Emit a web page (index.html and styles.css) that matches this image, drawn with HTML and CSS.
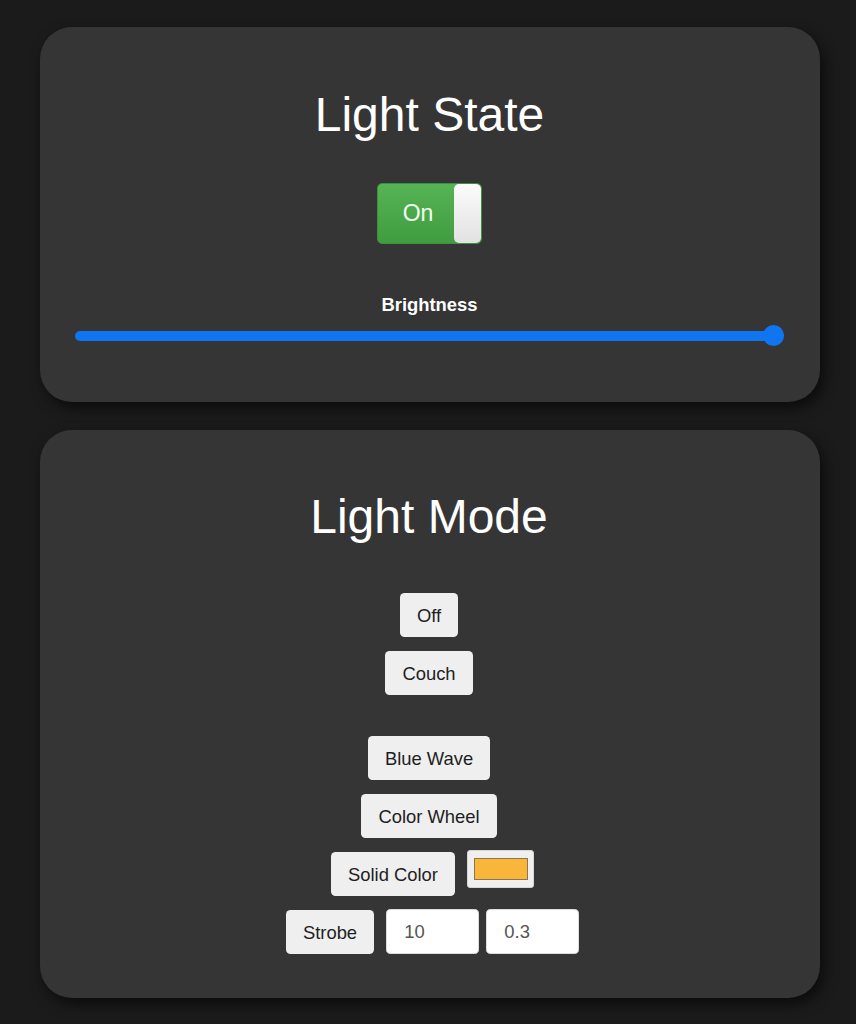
FILE: index.html
```html
<!DOCTYPE html>
<html lang="en">
<head>
<meta charset="utf-8">
<title>Light Control</title>
<link rel="stylesheet" href="styles.css">
</head>
<body>
<main class="page">
  <section class="card card-state">
    <h1 class="title">Light State</h1>
    <div class="toggle">
      <span class="toggle-label">On</span>
      <span class="toggle-knob"></span>
    </div>
    <div class="field-label">Brightness</div>
    <input class="slider" type="range" min="0" max="100" value="100">
  </section>

  <section class="card card-mode">
    <h1 class="title">Light Mode</h1>
    <div class="modes">
      <div class="row"><button class="btn">Off</button></div>
      <div class="row"><button class="btn">Couch</button></div>
      <div class="spacer"></div>
      <div class="row"><button class="btn">Blue Wave</button></div>
      <div class="row"><button class="btn">Color Wheel</button></div>
      <div class="row row-multi">
        <button class="btn">Solid Color</button>
        <input class="color" type="color" value="#f8b73a">
      </div>
      <div class="row row-multi">
        <button class="btn">Strobe</button>
        <input class="num num-first" type="text" value="10">
        <input class="num" type="text" value="0.3">
      </div>
    </div>
  </section>
</main>
</body>
</html>
```

FILE: styles.css
```css
html, body {
  margin: 0;
  padding: 0;
  background: #1c1b1c;
  font-family: "Liberation Sans", Arial, sans-serif;
}

.page {
  display: flex;
  flex-direction: column;
  gap: 28px;
  padding: 27px 36px 26px 40px;
}

.card {
  background: #353535;
  border-radius: 32px;
  box-shadow: 4px 6px 14px rgba(0, 0, 0, 0.6);
  display: flex;
  flex-direction: column;
  align-items: center;
}

.card-state {
  height: 375px;
  box-sizing: border-box;
  padding: 60px 36px 0 35px;
}

.card-mode {
  height: 568px;
  box-sizing: border-box;
  padding: 59px 36px 0 34px;
}

.title {
  margin: 0;
  font-size: 48px;
  line-height: 56px;
  font-weight: normal;
  color: #ffffff;
}

.toggle {
  margin-top: 40px;
  width: 105px;
  height: 61px;
  box-sizing: border-box;
  border: 1px solid #3f8f3f;
  border-radius: 5px;
  background: linear-gradient(#56b455, #3f9c40);
  display: flex;
  overflow: hidden;
}

.toggle-label {
  flex: 1;
  display: flex;
  align-items: center;
  justify-content: center;
  padding-left: 4px;
  color: #f2fff2;
  font-size: 23px;
}

.toggle-knob {
  width: 27px;
  background: linear-gradient(#fbfbfb, #e2e2e2);
  border-radius: 5px;
}

.field-label {
  margin-top: 50px;
  font-size: 18.4px;
  line-height: 22px;
  font-weight: bold;
  color: #ffffff;
}

.slider {
  -webkit-appearance: none;
  appearance: none;
  margin: 9px 0 0 0;
  width: 100%;
  height: 21px;
  background: transparent;
}

.slider::-webkit-slider-runnable-track {
  height: 10px;
  border-radius: 5px;
  background: #0f75f0;
}

.slider::-webkit-slider-thumb {
  -webkit-appearance: none;
  appearance: none;
  width: 21px;
  height: 21px;
  margin-top: -5.5px;
  border-radius: 50%;
  background: #0f75f0;
  border: none;
}

.modes {
  margin-top: 48px;
  display: flex;
  flex-direction: column;
  align-items: center;
  gap: 14px;
  width: 100%;
}

.row {
  display: flex;
  justify-content: center;
  align-items: flex-start;
  gap: 12px;
}

.row-multi {
  padding-left: 7px;
}

.spacer {
  height: 13px;
}

.btn {
  font-family: "Liberation Sans", Arial, sans-serif;
  font-size: 18.4px;
  line-height: 21px;
  padding: 11.5px 17.25px;
  border: none;
  border-radius: 4.6px;
  background: #efefef;
  color: #1e1e1e;
}

.color {
  -webkit-appearance: none;
  appearance: none;
  width: 67px;
  height: 38px;
  margin-top: -2px;
  padding: 0;
  box-sizing: border-box;
  border: 1px solid #d6d6d6;
  border-radius: 3px;
  background: #efefef;
}

.color::-webkit-color-swatch-wrapper {
  padding: 7px 5px 7px 6px;
}

.color::-webkit-color-swatch {
  border: 1px solid #8d7550;
  border-radius: 0;
}

.num {
  width: 93px;
  height: 45px;
  box-sizing: border-box;
  margin-top: -1px;
  padding: 0 0 0 17px;
  border: 1px solid #dcdcdc;
  border-radius: 4.6px;
  background: #ffffff;
  color: #555555;
  font-family: "Liberation Sans", Arial, sans-serif;
  font-size: 18.4px;
}

.num-first {
  margin-right: -5px;
}
```
